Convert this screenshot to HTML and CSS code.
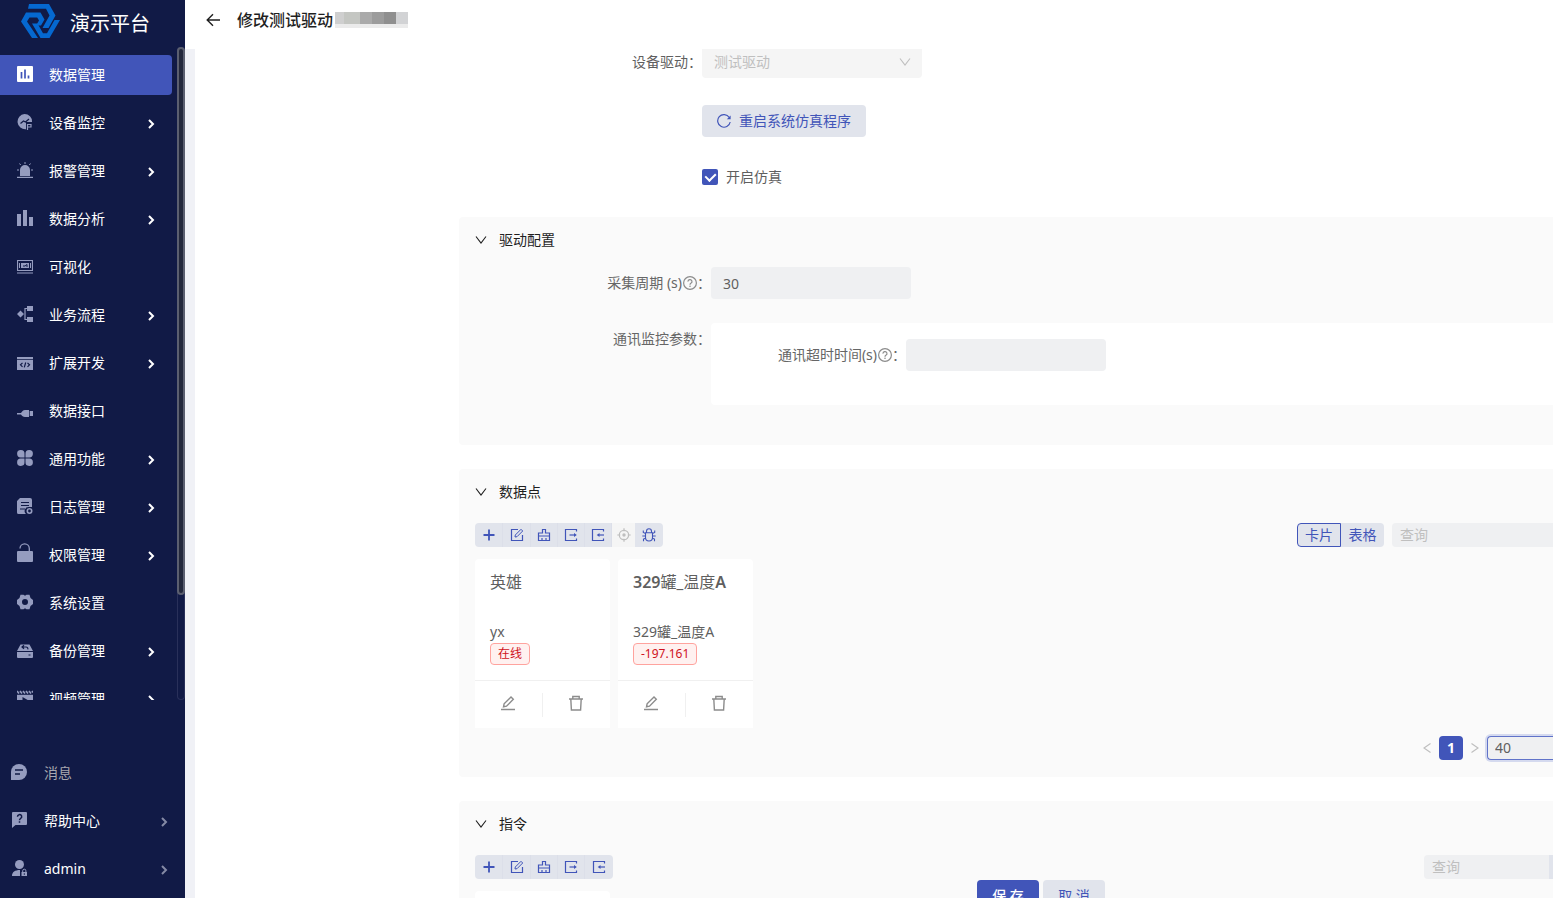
FILE: index.html
```html
<!DOCTYPE html>
<html lang="zh-CN">
<head>
<meta charset="utf-8">
<title>演示平台</title>
<link rel="stylesheet" href="styles.css">
</head>
<body>
<svg class="sprite" aria-hidden="true">
  <symbol id="i-right" viewBox="0 0 12 12"><path d="M4 2l4 4-4 4" fill="none" stroke="currentColor" stroke-width="2"/></symbol>
  <symbol id="i-down" viewBox="0 0 12 12"><path d="M1 2.500l5 6.500 5-6.500" fill="none" stroke="currentColor" stroke-width="1.100"/></symbol>
  <symbol id="i-plus" viewBox="0 0 14 14"><path d="M7 1.500v11M1.500 7h11" fill="none" stroke="currentColor" stroke-width="1.800"/></symbol>
  <symbol id="i-form" viewBox="0 0 14 14"><path d="M8 1.500H1.500v11h11V7" fill="none" stroke="currentColor" stroke-width="1.200"/><path d="M5 9l.3-2L11 1.300l1.700 1.700L7 8.700z" fill="none" stroke="currentColor"/></symbol>
  <symbol id="i-clear" viewBox="0 0 14 14"><path d="M5.500 5V1.500h3V5H12.500v3h-11V5zM1.500 8v4.500h11V8M5 12.500V10M9 12.500V10" fill="none" stroke="currentColor" stroke-width="1.200"/></symbol>
  <symbol id="i-export" viewBox="0 0 14 14"><path d="M12.500 3.500v-2h-11v11h11v-2" fill="none" stroke="currentColor" stroke-width="1.200"/><path d="M5.500 7h6" stroke="currentColor" stroke-width="1.200"/><path d="M10 5L12.800 7 10 9z" fill="currentColor"/></symbol>
  <symbol id="i-import" viewBox="0 0 14 14"><path d="M12.500 3.500v-2h-11v11h11v-2" fill="none" stroke="currentColor" stroke-width="1.200"/><path d="M7 7h6" stroke="currentColor" stroke-width="1.200"/><path d="M8.500 5L5.700 7l2.800 2z" fill="currentColor"/></symbol>
  <symbol id="i-aim" viewBox="0 0 14 14"><circle cx="7" cy="7" r="4.700" fill="none" stroke="currentColor" stroke-width="1.200"/><circle cx="7" cy="7" r="1.700" fill="currentColor"/><path d="M7 .3v3M7 10.700v3M.3 7h3M10.700 7h3" stroke="currentColor" stroke-width="1.200"/></symbol>
  <symbol id="i-bug" viewBox="0 0 14 14"><path d="M3.500 4.800h7v4.700a3.500 3.500 0 0 1-7 0zM4.500 4.800V3.300a2.500 2.500 0 0 1 5 0v1.500M3.500 5.500L1.300 4.500V2.500M10.500 5.500l2.200-1V2.500M3.500 8H.3M10.500 8h3.200M3.500 10.200l-2 .8v2.300M10.500 10.200l2 .8v2.300" fill="none" stroke="currentColor" stroke-width="1.100"/></symbol>
  <symbol id="i-help" viewBox="0 0 14 14"><circle cx="7" cy="7" r="6.400" fill="none" stroke="currentColor" stroke-width="1.200"/><path d="M5 5.600a2 1.900 0 1 1 2.900 1.600C7.200 7.600 7 7.900 7 8.700" fill="none" stroke="currentColor" stroke-width="1.200"/><circle cx="7" cy="10.300" r=".8" fill="currentColor"/></symbol>
  <symbol id="i-edit" viewBox="0 0 16 16"><path d="M1 14.500h14" stroke="currentColor" stroke-width="1.500"/><path d="M3.500 11.800l.6-3L11 2l2.300 2.300-6.800 6.900z" fill="none" stroke="currentColor" stroke-width="1.400"/></symbol>
  <symbol id="i-trash" viewBox="0 0 16 16"><path d="M1 4h14M4.800 4V1.500h6.400V4M2.800 4l.6 11h9.200l.6-11" fill="none" stroke="currentColor" stroke-width="1.400"/></symbol>
</svg>
<div class="app">
  <aside class="sidebar">
    <div class="brand">
      <svg class="brand-logo" viewBox="0 0 40 36"><g fill="#0568d0"><path d="M8 0h20l6.500 11.500-7 12.500h-6l7-12.500L25 4.800H7z"/><path d="M5 8.500h14.500l4 7-3.500 6h-5l3-5-1.800-3H8.500L6 17.500 17 34h-6L0 17.500z"/><path d="M11 19.500h5.500l5.500 9.700h4L33.500 16H39L28.500 34h-9z"/></g></svg>
      <span>演示平台</span>
    </div>
    <div class="menu-wrap">
      <nav class="menu">
        <a class="item active" href="#"><svg class="ico" viewBox="0 0 16 16"><path fill="#fff" d="M1 0h14a1 1 0 0 1 1 1v14a1 1 0 0 1-1 1H1a1 1 0 0 1-1-1V1a1 1 0 0 1 1-1z"/><path d="M4.500 6v6.500M8 3.500v9M11.500 9.500v3" stroke="#4155b9" stroke-width="1.700"/></svg><span>数据管理</span></a>
        <a class="item" href="#"><svg class="ico" viewBox="0 0 16 16"><path fill="currentColor" d="M7.500 0a7.500 7.500 0 0 1 7.500 8H9v7.300A7.600 7.600 0 1 1 7.500 0z"/><path d="M3.500 9.500l3-2.500 2 1L12 5" fill="none" stroke="#111a46" stroke-width="1.200"/><path d="M10.500 16v-5.500H14V13h-3" fill="none" stroke="currentColor" stroke-width="1.200"/></svg><span>设备监控</span><svg class="arrow"><use href="#i-right"/></svg></a>
        <a class="item" href="#"><svg class="ico" viewBox="0 0 16 16"><path fill="currentColor" d="M3 14V8a5 5 0 0 1 10 0v6zM0 14.800h16V16H0z"/><path d="M8 0v2M2.500 1.500l1.200 1.500M13.500 1.500L12.300 3M0 8h2M14 8h2" stroke="currentColor"/></svg><span>报警管理</span><svg class="arrow"><use href="#i-right"/></svg></a>
        <a class="item" href="#"><svg class="ico" viewBox="0 0 16 16"><path fill="currentColor" d="M0 4h4v12H0zM6 0h4v16H6zM12 7h4v9h-4z"/></svg><span>数据分析</span><svg class="arrow"><use href="#i-right"/></svg></a>
        <a class="item" href="#"><svg class="ico" viewBox="0 0 16 16"><path d="M.5 2.500h15v10H.5zM0 15h16" fill="none" stroke="currentColor" stroke-width="1.200"/><path d="M2 5h1v5H2zM4 5h8v5H4zM13 5h1v5h-1z" fill="currentColor"/><path d="M6 8h2l2-1.500v2.500" fill="none" stroke="#111a46"/></svg><span>可视化</span></a>
        <a class="item" href="#"><svg class="ico" viewBox="0 0 16 16"><path fill="currentColor" d="M0 8l3.500-3.500L7 8l-3.500 3.500zM10 0h6v5h-6zM10 11h6v5h-6z"/><path d="M10 2.500H8v11h2" fill="none" stroke="currentColor" stroke-width="1.200"/></svg><span>业务流程</span><svg class="arrow"><use href="#i-right"/></svg></a>
        <a class="item" href="#"><svg class="ico" viewBox="0 0 16 16"><path fill="currentColor" d="M0 3h16v2.200H0zM0 6h16v10H0z"/><path d="M5.500 8.800l-2 2 2 2M10.500 8.800l2 2-2 2M8.700 8.500l-1.400 4.800" fill="none" stroke="#111a46" stroke-width="1.200"/></svg><span>扩展开发</span><svg class="arrow"><use href="#i-right"/></svg></a>
        <a class="item" href="#"><svg class="ico" viewBox="0 0 16 16"><path fill="currentColor" d="M0 11h4c1-1.500 2-3 4-3h4v7H8c-2 0-3-1-4-2.500H0zM12.700 9H16v5h-3.300z"/></svg><span>数据接口</span></a>
        <a class="item" href="#"><svg class="ico" viewBox="0 0 16 16"><path fill="currentColor" d="M7.500 7.500H4A3.700 3.700 0 1 1 7.500 4zM8.500 7.500V4A3.700 3.700 0 1 1 12 7.500zM7.500 8.500V12A3.700 3.700 0 1 1 4 8.500zM8.500 8.500H12A3.700 3.700 0 1 1 8.500 12z"/></svg><span>通用功能</span><svg class="arrow"><use href="#i-right"/></svg></a>
        <a class="item" href="#"><svg class="ico" viewBox="0 0 16 16"><path fill="currentColor" d="M3 0h10a2 2 0 0 1 2 2v7h-3a4 4 0 0 0-3 7H1.500A1.500 1.500 0 0 1 0 14.500V3z"/><path d="M4 4.500h8M4 7.500h8M3 11h5" stroke="#111a46"/><circle cx="12.500" cy="13" r="2.200" fill="none" stroke="currentColor" stroke-width="1.600"/></svg><span>日志管理</span><svg class="arrow"><use href="#i-right"/></svg></a>
        <a class="item" href="#"><svg class="ico tall" viewBox="0 0 16 20"><path fill="currentColor" d="M1 8h14a1 1 0 0 1 1 1v9a1 1 0 0 1-1 1H1a1 1 0 0 1-1-1V9a1 1 0 0 1 1-1z"/><path d="M3 5.500a4.600 4.600 0 0 1 9.300 0V8" fill="none" stroke="currentColor" stroke-width="1.300"/></svg><span>权限管理</span><svg class="arrow"><use href="#i-right"/></svg></a>
        <a class="item" href="#"><svg class="ico" viewBox="0 0 16 16"><path fill="currentColor" fill-rule="evenodd" d="M3.500.8h3l1.500 1 1.500-1h3L13.500 4 16 6v4l-2.500 2-1 3.200h-3l-1.500-1-1.500 1h-3L2.500 12 0 10V6l2.500-2zM8 5a3 3 0 1 0 0 6 3 3 0 0 0 0-6z"/></svg><span>系统设置</span></a>
        <a class="item" href="#"><svg class="ico" viewBox="0 0 16 16"><path fill="currentColor" d="M3.500 2.500h9L16 9H0zM0 10h16v5a1 1 0 0 1-1 1H1a1 1 0 0 1-1-1z"/><path d="M5 5h4a1.800 1.800 0 0 1 1.800 2.300M7 3.300L5 5l2 1.700M11.500 13h2" fill="none" stroke="#111a46" stroke-width="1.200"/></svg><span>备份管理</span><svg class="arrow"><use href="#i-right"/></svg></a>
        <a class="item" href="#"><svg class="ico" viewBox="0 0 16 16"><path fill="currentColor" d="M0 4.800h16V16H0z"/><path d="M0 1l2 2.500M3 1l2 2.500M6 1l2 2.500M9 1l2 2.500M12 1l2 2.500M15 1l1 1.500" stroke="currentColor" stroke-width="1.600"/><path d="M5.500 7l6 3.500-6 3.500z" fill="#111a46"/></svg><span>视频管理</span><svg class="arrow"><use href="#i-right"/></svg></a>
      </nav>
      <div class="track"><div class="thumb"></div></div>
    </div>
    <nav class="foot">
      <a class="item muted" href="#"><svg class="ico" viewBox="0 0 16 16"><path fill="currentColor" d="M8 0a8 8 0 1 1 0 16H0V8a8 8 0 0 1 8-8z"/><path d="M4 6h8M4 10h5" stroke="#111a46" stroke-width="1.400"/></svg><span>消息</span></a>
      <a class="item" href="#"><svg class="ico" viewBox="0 0 16 16"><path fill="currentColor" d="M2 0h13a1 1 0 0 1 1 1v11a1 1 0 0 1-1 1H4.500L1 16V1a1 1 0 0 1 1-1z"/><path d="M6.500 4.700a2.100 2 0 1 1 3.200 1.600C8.800 6.900 8.500 7.100 8.500 8.200M8.500 9.200v1.500" fill="none" stroke="#111a46" stroke-width="1.500"/></svg><span>帮助中心</span><svg class="arrow"><use href="#i-right"/></svg></a>
      <a class="item" href="#"><svg class="ico" viewBox="0 0 16 16"><circle cx="8.500" cy="4.500" r="4.500" fill="currentColor"/><path fill="currentColor" d="M1 16c0-4 3-6 8-6v6zM10.500 12H16v4h-5.500z"/><path d="M11.700 12v-1.200a1.600 1.600 0 0 1 3.200 0V12" fill="none" stroke="currentColor"/><path d="M13.300 13.300v1.500" stroke="#111a46"/></svg><span>admin</span><svg class="arrow"><use href="#i-right"/></svg></a>
    </nav>
  </aside>

  <main class="main">
    <header class="head">
      <button class="back" type="button" aria-label="返回"><svg viewBox="0 0 14 14"><path d="M14 7H1.500M7 1.200L1.200 7 7 12.800" fill="none" stroke="currentColor" stroke-width="1.400"/></svg></button>
      <h1>修改测试驱动</h1>
      <div class="mosaic"></div>
    </header>
    <div class="body">
      <form class="content">
        <div class="top-row">
          <label for="driver">设备驱动：</label>
          <div class="select-box"><select id="driver" disabled><option>测试驱动</option></select><svg><use href="#i-down"/></svg></div>
        </div>
        <div class="top-row restart">
          <button class="btn" type="button"><svg viewBox="0 0 14 14"><path d="M12.300 3.500A6.300 6.300 0 1 0 13.200 8" fill="none" stroke="currentColor" stroke-width="1.200"/><path d="M13.600 1.500v3.800H9.800z" fill="currentColor"/></svg>重启系统仿真程序</button>
        </div>
        <div class="top-row sim">
          <input type="checkbox" id="sim" checked><label for="sim">开启仿真</label>
        </div>

        <section class="panel config">
          <h2><svg><use href="#i-down"/></svg>驱动配置</h2>
          <div class="field">
            <label for="cycle">采集周期 (s)<svg><use href="#i-help"/></svg>：</label>
            <input class="text" id="cycle" value="30">
          </div>
          <div class="field">
            <span class="label">通讯监控参数：</span>
            <div class="subbox">
              <label for="timeout">通讯超时时间(s)<svg><use href="#i-help"/></svg>：</label>
              <input class="text" id="timeout">
            </div>
          </div>
        </section>

        <section class="panel points">
          <h2><svg><use href="#i-down"/></svg>数据点</h2>
          <div class="bar">
            <div class="tools">
              <button type="button" aria-label="添加"><svg><use href="#i-plus"/></svg></button>
              <button type="button" aria-label="编辑"><svg><use href="#i-form"/></svg></button>
              <button type="button" aria-label="清空"><svg><use href="#i-clear"/></svg></button>
              <button type="button" aria-label="导出"><svg><use href="#i-export"/></svg></button>
              <button type="button" aria-label="导入"><svg><use href="#i-import"/></svg></button>
              <button type="button" aria-label="定位" disabled><svg><use href="#i-aim"/></svg></button>
              <button type="button" aria-label="调试"><svg><use href="#i-bug"/></svg></button>
            </div>
            <div class="modes"><button class="on" type="button">卡片</button><button type="button">表格</button></div>
            <input class="search wide" placeholder="查询" aria-label="查询数据点">
          </div>
          <div class="cards">
            <article class="card">
              <div class="info"><h3>英雄</h3><p>yx</p><span class="tag">在线</span></div>
              <div class="acts"><button type="button" aria-label="编辑"><svg><use href="#i-edit"/></svg></button><button type="button" aria-label="删除"><svg><use href="#i-trash"/></svg></button></div>
            </article>
            <article class="card">
              <div class="info"><h3><b>329</b>罐<b>_</b>温度<b>A</b></h3><p>329罐_温度A</p><span class="tag">-197.161</span></div>
              <div class="acts"><button type="button" aria-label="编辑"><svg><use href="#i-edit"/></svg></button><button type="button" aria-label="删除"><svg><use href="#i-trash"/></svg></button></div>
            </article>
          </div>
          <div class="pager">
            <button class="turn prev" type="button" aria-label="上一页"><svg viewBox="0 0 8 12"><path d="M7.500 1.500L1 6l6.500 4.500" fill="none" stroke="currentColor" stroke-width="1.200"/></svg></button>
            <button class="page" type="button">1</button>
            <button class="turn" type="button" aria-label="下一页"><svg viewBox="0 0 8 12"><path d="M.5 1.500L7 6 .5 10.500" fill="none" stroke="currentColor" stroke-width="1.200"/></svg></button>
            <select class="size" aria-label="每页条数"><option>40</option></select>
          </div>
        </section>

        <section class="panel commands">
          <h2><svg><use href="#i-down"/></svg>指令</h2>
          <div class="bar">
            <div class="tools">
              <button type="button" aria-label="添加"><svg><use href="#i-plus"/></svg></button>
              <button type="button" aria-label="编辑"><svg><use href="#i-form"/></svg></button>
              <button type="button" aria-label="清空"><svg><use href="#i-clear"/></svg></button>
              <button type="button" aria-label="导出"><svg><use href="#i-export"/></svg></button>
              <button type="button" aria-label="导入"><svg><use href="#i-import"/></svg></button>
            </div>
            <input class="search" placeholder="查询" aria-label="查询指令"><div class="search-end"></div>
          </div>
          <div class="cards"><article class="card blank"></article></div>
        </section>
      </form>
    </div>
    <div class="actions"><button class="primary" type="button">保 存</button><button type="button">取 消</button></div>
  </main>
</div>
</body>
</html>
```
FILE: styles.css
```css
* { box-sizing: border-box; }
body {
  margin: 0;
  font: 14px/22px "Noto Sans", "Noto Sans CJK SC", sans-serif;
  color: #5f5f5f;
  background: #fff;
}
button, input, select { font: inherit; color: inherit; margin: 0; border: 0; padding: 0; }
button { cursor: pointer; }
h1, h2, h3, p { margin: 0; font-weight: 400; }
a { text-decoration: none; color: inherit; }
svg { flex: none; display: block; }
.sprite { position: absolute; width: 0; height: 0; }
.app { display: flex; height: 100vh; overflow: hidden; }

/* sidebar */
.sidebar { width: 185px; flex: none; display: flex; flex-direction: column; background: #111a46; color: #fff; }
.brand { height: 47px; flex: none; display: flex; align-items: center; gap: 9px; padding-left: 21px; font-size: 20px; }
.brand-logo { width: 40px; height: 36px; margin-bottom: 4px; }
.menu-wrap { flex: 1; min-height: 0; display: flex; justify-content: space-between; }
.menu { width: 172px; padding-top: 8px; display: flex; flex-direction: column; gap: 8px; overflow: hidden; }
.item { height: 40px; flex: none; display: flex; align-items: center; gap: 16px; padding-left: 17px; }
.item.active { background: #4155b9; border-radius: 0 4px 4px 0; }
.ico { width: 16px; height: 16px; color: #959cbf; margin-bottom: 2px; }
.ico.tall { height: 20px; margin-bottom: 4px; }
.arrow { width: 12px; height: 12px; margin: 2px 15px 0 auto; }
.track { width: 8px; border: 1px solid #29305a; border-top: 0; border-radius: 4px; }
.thumb { height: 84%; margin: 0 -1px; border: 2px solid #5b5f70; border-radius: 4px; background: #23283c; }
.foot { flex: none; padding: 49px 0 5px; }
.foot .item { height: 48px; padding-left: 11px; gap: 17px; }
.foot .arrow { color: #858aa5; }
.foot .muted span { color: #a9a9b0; }

/* page */
.main { flex: 1; min-width: 0; display: flex; flex-direction: column; position: relative; }
.head { height: 49px; flex: none; display: flex; align-items: center; padding: 0 0 9px 21px; color: #1f1f1f; }
.back { width: 14px; height: 14px; background: none; margin-right: 17px; }
.head h1 { font-size: 16px; font-weight: 500; }
.mosaic { width: 73px; height: 16px; margin-left: 2px; background: linear-gradient(90deg, #cfcfcf 0 9px, #c4c6c2 9px 25px, #aaa 25px 37px, #9c9c9c 37px 49px, #8f8f8f 49px 61px, #d2d3d5 61px); border-bottom: 4px solid #ebebeb; }
.body { flex: 1; min-height: 0; padding-left: 10px; background: #f0f1f6; }
.content { height: 100%; overflow: hidden; background: #fff; }

.top-row { display: flex; align-items: center; height: 32px; padding-left: 507px; }
.top-row:first-child { margin: -3px 0 27px; padding-left: 0; }
.top-row:first-child label { width: 507px; text-align: right; }
.select-box { width: 220px; display: flex; align-items: center; background: #f5f5f5; border-radius: 4px; color: #bfbfbf; }
.select-box select { flex: 1; height: 32px; padding-left: 12px; appearance: none; background: none; opacity: 1; }
.select-box svg { width: 12px; height: 12px; margin-right: 11px; }
.btn { display: flex; align-items: center; gap: 8px; height: 32px; padding: 0 15px; background: #e1e4ec; color: #4155b9; border-radius: 4px; }
.btn svg { width: 14px; height: 14px; }
.sim { margin: 24px 0; gap: 8px; }
.sim input { width: 16px; height: 16px; appearance: none; background: #4155b9; border-radius: 2px; display: grid; place-items: center; }
.sim input::after { content: ""; width: 5px; height: 8px; margin-bottom: 2px; border: solid #fff; border-width: 0 2px 2px 0; rotate: 45deg; }

/* panels */
.panel { margin: 0 0 24px 264px; padding-left: 16px; background: #fafafa; border-radius: 4px 0 0 4px; }
.panel h2 { display: flex; align-items: center; gap: 12px; height: 46px; font-size: 14px; color: #1f1f1f; }
.panel h2 svg { width: 12px; height: 12px; }
.config { padding: 0 0 40px; }
.config h2 { padding-left: 16px; margin-bottom: 4px; }
.field { display: flex; margin-bottom: 24px; }
.field:last-child { margin-bottom: 0; }
.field label, .field .label { display: flex; align-items: center; justify-content: flex-end; height: 32px; width: 252px; color: #666; }
.field label svg { width: 14px; height: 14px; color: #8c8c8c; margin-left: 1px; }
.text { width: 200px; height: 32px; padding: 0 12px; background: #eff0f2; border-radius: 4px; }
.subbox { flex: 1; display: flex; padding: 16px 0 34px; background: #fff; border-radius: 4px 0 0 4px; }
.subbox label { width: 195px; }

.bar { display: flex; margin: 8px 0 12px; height: 24px; }
.tools { display: flex; margin-right: auto; }
.tools button { width: 28px; display: grid; place-items: center; background: #e1e4ec; color: #4155b9; border-right: 1px solid #dcdfe9; }
.tools button:nth-child(n+3) { width: 27px; }
.tools button:first-child { border-radius: 4px 0 0 4px; }
.tools button:last-child { border-radius: 0 4px 4px 0; border: 0; width: 28px; }
.tools button:disabled { width: 23px; background: #f5f5f5; color: #bfbfbf; border: 0; }
.tools svg { width: 14px; height: 14px; }
.modes { display: flex; margin-right: 8px; }
.modes button { width: 43px; background: #e1e4ec; color: #4155b9; border-radius: 0 4px 4px 0; }
.modes .on { width: 44px; border: 1px solid #4155b9; border-radius: 4px 0 0 4px; }
.search { width: 125px; padding: 0 8px; background: #eff0f2; border-radius: 4px 0 0 4px; }
.search.wide { width: 161px; }
.search::placeholder { color: #bfbfbf; opacity: 1; }
.search-end { width: 4px; background: #e1e4ec; }

.cards { display: flex; gap: 8px; }
.card { width: 135px; background: #fff; border-radius: 4px 4px 0 0; }
.card.blank { height: 169px; }
.info { height: 121px; padding: 12px 15px 0; }
.info h3 { font-size: 16px; white-space: nowrap; margin-bottom: 28px; }
.info b { font-weight: 600; }
.info p { white-space: nowrap; }
.tag { display: inline-block; padding: 0 7px; border: 1px solid #ffa39e; border-radius: 4px; background: #fff1f0; color: #cf1322; font-size: 12px; line-height: 20px; vertical-align: top; }
.acts { display: flex; border-top: 1px solid #f0f0f0; padding: 12px 0 11px; }
.acts button { flex: 1; height: 24px; display: grid; place-items: center; background: none; color: #8c8c8c; padding: 0 2px 4px 0; }
.acts button + button { border-left: 1px solid #f0f0f0; }
.acts svg { width: 16px; height: 16px; }
.pager { display: flex; justify-content: flex-end; align-items: center; padding: 8px 0 17px; }
.pager button { height: 24px; background: none; color: #bfbfbf; }
.pager .turn { width: 24px; display: grid; place-items: center; }
.pager .turn svg { width: 8px; height: 12px; }
.pager .page { width: 24px; background: #4155b9; color: #fff; font-weight: 700; border-radius: 4px; }
.size { width: 66px; height: 24px; padding-left: 7px; appearance: none; background: #eff0f2; border: 1px solid #6073c9; border-right: 0; border-radius: 4px 0 0 4px; box-shadow: 0 0 0 2px #d5daef; }

.actions { position: absolute; left: 792px; bottom: -14px; display: flex; gap: 4px; }
.actions button { width: 62px; height: 32px; border-radius: 4px; background: #e1e4ec; color: #4155b9; }
.actions .primary { background: #4155b9; color: #fff; font-weight: 500; }
```
